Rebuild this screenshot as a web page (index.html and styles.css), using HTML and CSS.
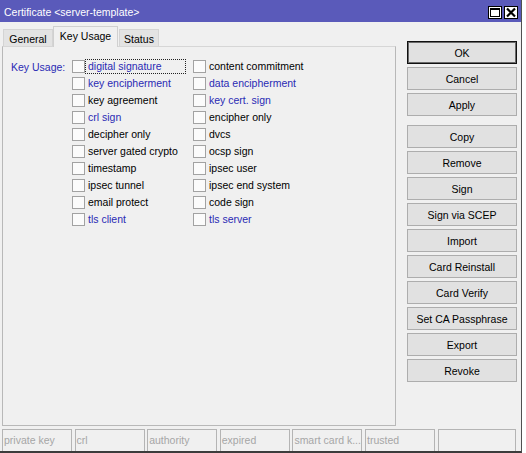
FILE: index.html
```html
<!DOCTYPE html>
<html>
<head>
<meta charset="utf-8">
<link rel="stylesheet" href="styles.css">
</head>
<body>
<div class="window">
  <div class="titlebar">
    <span class="title">Certificate &lt;server-template&gt;</span>
    <div class="tb-btns">
      <span class="tb-btn"><svg width="12" height="11" viewBox="0 0 12 11"><rect x="1.5" y="1.5" width="9" height="8" fill="none" stroke="#000" stroke-width="1"/><rect x="1" y="1" width="10" height="2" fill="#000"/></svg></span>
      <span class="tb-btn"><svg width="12" height="11" viewBox="0 0 12 11"><path d="M2 1.5 L10 9.5 M10 1.5 L2 9.5" stroke="#000" stroke-width="2.2" fill="none"/></svg></span>
    </div>
  </div>
  <div class="main">
    <div class="left">
      <div class="tabs">
        <div class="tab t-general">General</div>
        <div class="tab active t-key">Key Usage</div>
        <div class="tab t-status">Status</div>
      </div>
      <div class="panel">
        <div class="ku-label">Key Usage:</div>
        <div class="col col1">
          <div class="item blue"><span class="cb"></span><span class="lbl focus">digital signature</span></div>
          <div class="item blue"><span class="cb"></span><span class="lbl">key encipherment</span></div>
          <div class="item"><span class="cb"></span><span class="lbl">key agreement</span></div>
          <div class="item blue"><span class="cb"></span><span class="lbl">crl sign</span></div>
          <div class="item"><span class="cb"></span><span class="lbl">decipher only</span></div>
          <div class="item"><span class="cb"></span><span class="lbl">server gated crypto</span></div>
          <div class="item"><span class="cb"></span><span class="lbl">timestamp</span></div>
          <div class="item"><span class="cb"></span><span class="lbl">ipsec tunnel</span></div>
          <div class="item"><span class="cb"></span><span class="lbl">email protect</span></div>
          <div class="item blue"><span class="cb"></span><span class="lbl">tls client</span></div>
        </div>
        <div class="col col2">
          <div class="item"><span class="cb"></span><span class="lbl">content commitment</span></div>
          <div class="item blue"><span class="cb"></span><span class="lbl">data encipherment</span></div>
          <div class="item blue"><span class="cb"></span><span class="lbl">key cert. sign</span></div>
          <div class="item"><span class="cb"></span><span class="lbl">encipher only</span></div>
          <div class="item"><span class="cb"></span><span class="lbl">dvcs</span></div>
          <div class="item"><span class="cb"></span><span class="lbl">ocsp sign</span></div>
          <div class="item"><span class="cb"></span><span class="lbl">ipsec user</span></div>
          <div class="item"><span class="cb"></span><span class="lbl">ipsec end system</span></div>
          <div class="item"><span class="cb"></span><span class="lbl">code sign</span></div>
          <div class="item blue"><span class="cb"></span><span class="lbl">tls server</span></div>
        </div>
      </div>
    </div>
    <div class="buttons">
      <div class="btn default">OK</div>
      <div class="btn">Cancel</div>
      <div class="btn">Apply</div>
      <div class="btn sep">Copy</div>
      <div class="btn">Remove</div>
      <div class="btn">Sign</div>
      <div class="btn">Sign via SCEP</div>
      <div class="btn">Import</div>
      <div class="btn">Card Reinstall</div>
      <div class="btn">Card Verify</div>
      <div class="btn">Set CA Passphrase</div>
      <div class="btn">Export</div>
      <div class="btn">Revoke</div>
    </div>
  </div>
  <div class="statusbar">
    <div class="field">private key</div>
    <div class="field">crl</div>
    <div class="field">authority</div>
    <div class="field">expired</div>
    <div class="field">smart card k...</div>
    <div class="field">trusted</div>
    <div class="field last"></div>
  </div>
</div>
</body>
</html>
```

FILE: styles.css
```css
html, body {
  margin: 0;
  padding: 0;
  background: #ffffff;
}
body {
  font-family: "Liberation Sans", Arial, sans-serif;
  font-size: 10.5px;
  color: #000;
}
.window {
  width: 522px;
  height: 453px;
  box-sizing: border-box;
  background: #f0f0f0;
  border-right: 1px solid #505050;
  border-bottom: 2px solid #3c3c3c;
  display: flex;
  flex-direction: column;
}
.titlebar {
  height: 22px;
  flex: none;
  background: #5a5aba;
  display: flex;
  align-items: center;
  justify-content: space-between;
  padding: 0 3px 0 4px;
  box-sizing: border-box;
}
.title {
  color: #ffffff;
  font-size: 10.5px;
  padding-top: 1px;
}
.tb-btns {
  display: flex;
  gap: 2px;
  padding-top: 2px;
}
.tb-btn {
  width: 14px;
  height: 13px;
  box-sizing: border-box;
  background: #ffffff;
  border: 1px solid #000;
  display: flex;
  align-items: center;
  justify-content: center;
}
.tb-btn svg { display: block; }
.main {
  display: flex;
  height: 404px;
  flex: none;
}
.left {
  margin-left: 2px;
  margin-top: 4px;
  width: 394px;
  display: flex;
  flex-direction: column;
}
.tabs {
  height: 20px;
  display: flex;
  align-items: flex-end;
  position: relative;
  z-index: 1;
}
.tab {
  height: 17px;
  box-sizing: border-box;
  background: #e3e3e3;
  border: 1px solid #d4d4d4;
  border-bottom: none;
  display: flex;
  align-items: center;
  justify-content: center;
  padding-top: 1px;
}
.t-general { width: 50px; margin-left: 1px; }
.t-key { width: 65px; }
.t-status { width: 40px; margin-left: 1px; }
.tab.active {
  height: 21px;
  margin-bottom: -1px;
  background: #f0f0f0;
  border-color: #d0d0d0;
  padding-top: 0;
  padding-bottom: 3px;
}
.panel {
  height: 380px;
  box-sizing: border-box;
  border: 1px solid #b8b8b8;
  border-top-color: #d6d6d6;
  background: #f0f0f0;
  display: flex;
  padding: 11px 0 0 8px;
}
.ku-label {
  width: 61px;
  height: 17px;
  line-height: 17px;
  color: #2a2ab4;
  padding-top: 0.5px;
}
.col {
  display: flex;
  flex-direction: column;
}
.col1 { width: 121px; }
.item {
  height: 17px;
  display: flex;
  align-items: center;
}
.cb {
  width: 13px;
  height: 13px;
  box-sizing: border-box;
  border: 1px solid #a2a2a2;
  background: #fbfbfb;
  flex: none;
}
.lbl {
  height: 15px;
  line-height: 13px;
  box-sizing: border-box;
  border: 1px solid transparent;
  padding: 0 2px;
  white-space: nowrap;
}
.lbl.focus {
  width: 101px;
  border: 1px dotted #222;
}
.blue .lbl { color: #2a2ab4; }
.buttons {
  margin-left: 11px;
  padding-top: 19px;
  width: 110px;
  display: flex;
  flex-direction: column;
  gap: 3px;
}
.btn {
  height: 23px;
  box-sizing: border-box;
  background: #e1e1e1;
  border: 1px solid #adadad;
  display: flex;
  align-items: center;
  justify-content: center;
}
.btn.default {
  border-color: #111;
  box-shadow: inset 0 0 0 1px #6a6a6a;
}
.btn.sep { margin-top: 6px; }
.statusbar {
  margin-top: 3px;
  padding-left: 2px;
  height: 22px;
  display: flex;
  gap: 2.6px;
}
.field {
  width: 70px;
  height: 22px;
  box-sizing: border-box;
  border: 1px solid #b4b4b4;
  border-bottom: none;
  color: #a6a6a6;
  padding: 4px 0 0 1px;
  white-space: nowrap;
  overflow: hidden;
}
.field.last { width: 78px; }
```
